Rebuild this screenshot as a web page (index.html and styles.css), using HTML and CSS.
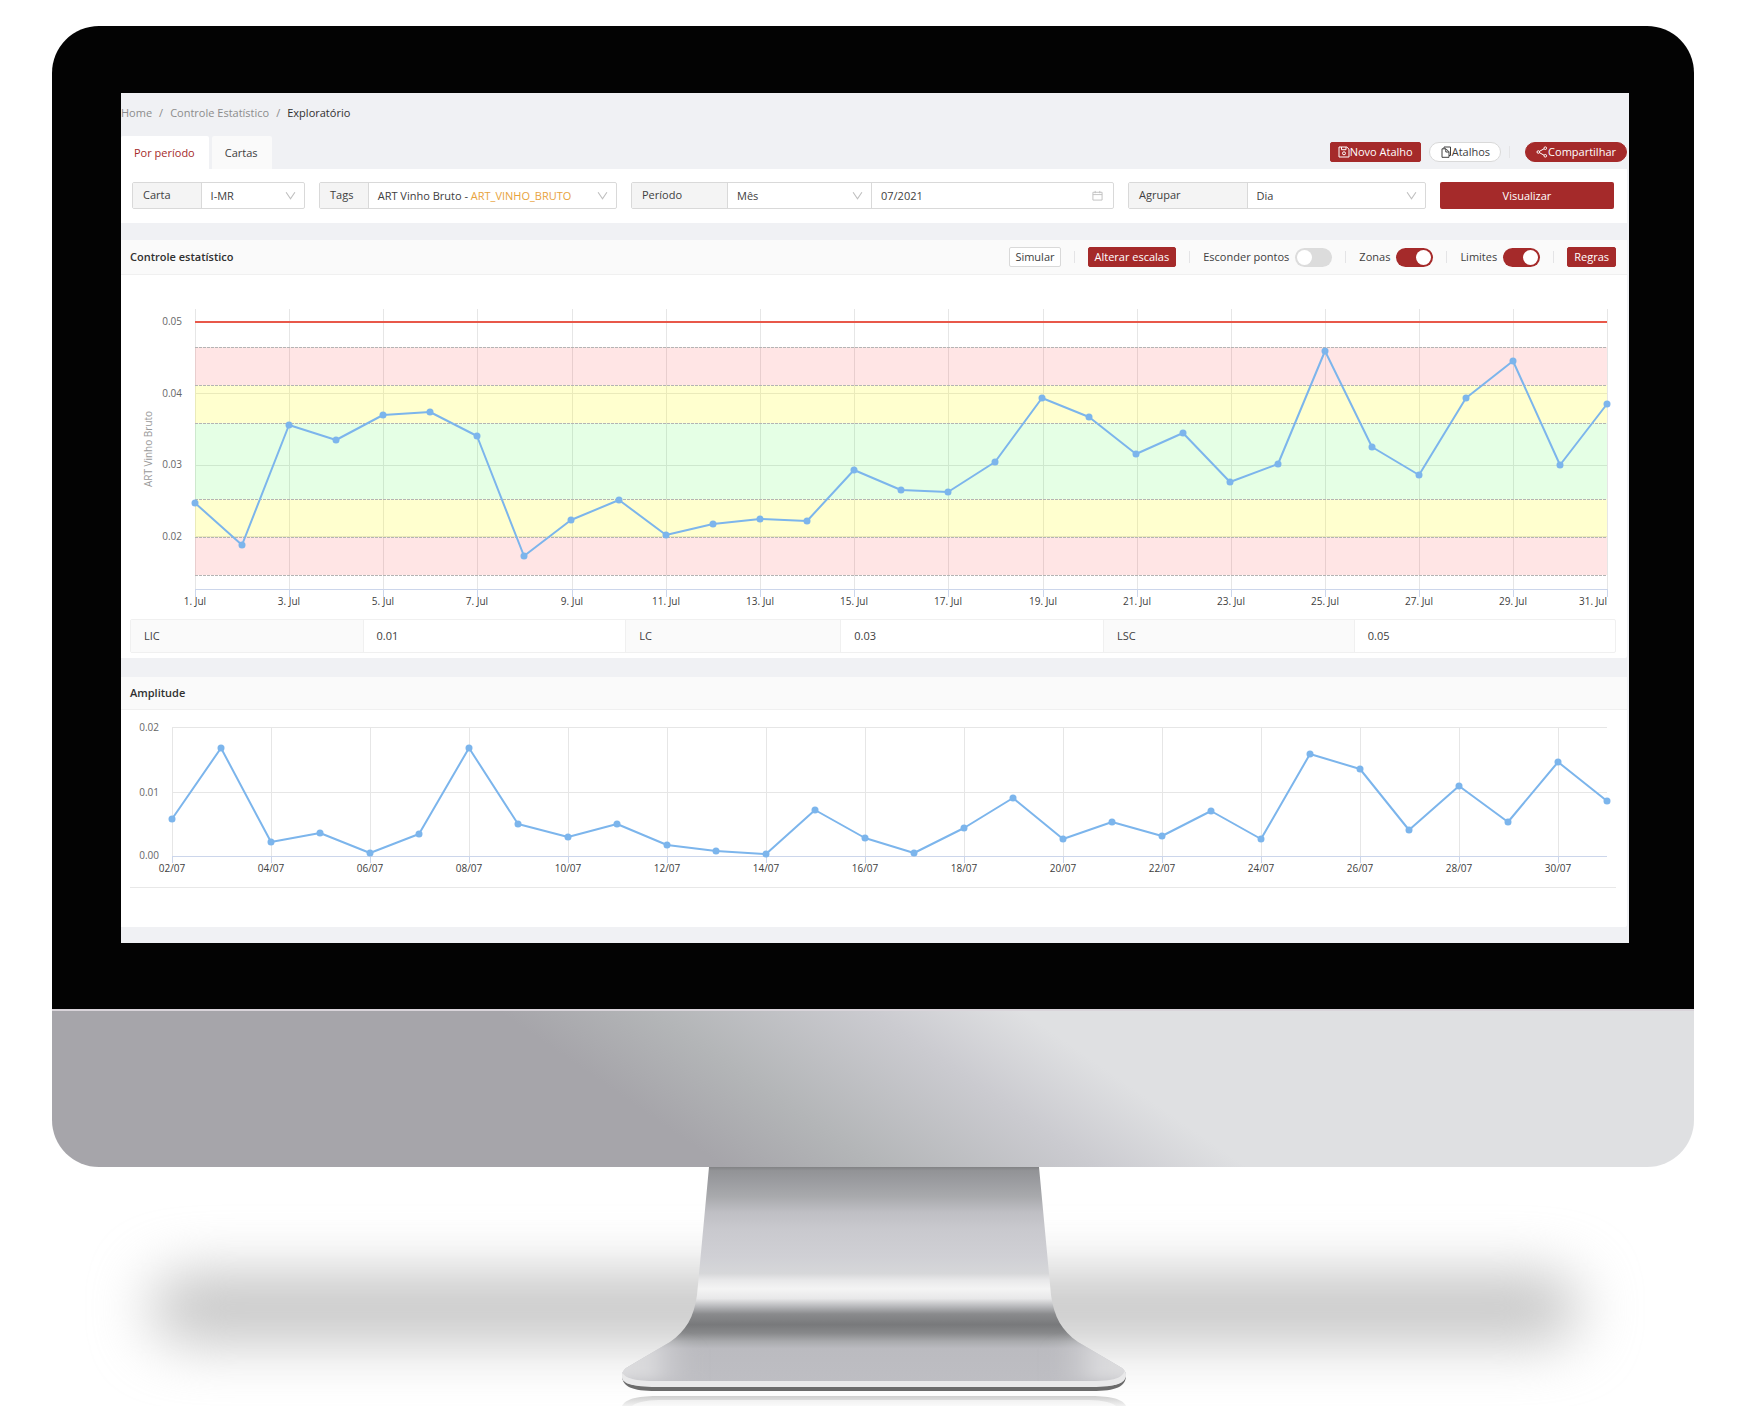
FILE: index.html
```html
<!DOCTYPE html>
<html lang="pt-BR">
<head>
<meta charset="utf-8">
<meta name="viewport" content="width=device-width, initial-scale=1">
<title>Controle Estatístico - Exploratório</title>
<link rel="stylesheet" href="styles.css">
</head>
<body>
<div class="workstation">
  <div class="monitor">
    <div class="bezel">
      <main class="screen">
        <nav class="breadcrumb" aria-label="Navegação">
          <a href="#home">Home</a><span class="sep">/</span><a href="#controle">Controle Estatístico</a><span class="sep">/</span><span class="current" aria-current="page">Exploratório</span>
        </nav>

        <div class="topbar">
          <div class="tabs" role="tablist">
            <button class="tab tab-active" type="button" role="tab" aria-selected="true">Por período</button>
            <button class="tab" type="button" role="tab" aria-selected="false">Cartas</button>
          </div>
          <div class="actions">
            <button class="btn btn-primary btn-save" type="button"><svg class="icon" viewBox="0 0 12 12" aria-hidden="true"><path d="M1 1h7.800L11 3.200V11H1zM3.500 1v2.700h4.500V1"/><circle cx="6" cy="7.300" r="1.500"/></svg>Novo Atalho</button>
            <button class="btn btn-pill" type="button"><svg class="icon" viewBox="0 0 12 12" aria-hidden="true"><path d="M4 2.500V1H10.500V9.500H9M2 2.800H6L9 5.800V11.300H2zM5.800 3V6H9"/></svg>Atalhos</button>
            <span class="divider"></span>
            <button class="btn btn-primary btn-pill btn-share" type="button"><svg class="icon" viewBox="0 0 12 12" aria-hidden="true"><path d="M3.500 5.300L8 2.800M3.500 6.700L8 9.200"/><circle cx="2.300" cy="6" r="1.300"/><circle cx="9.300" cy="2.200" r="1.300"/><circle cx="9.300" cy="9.800" r="1.300"/></svg>Compartilhar</button>
          </div>
        </div>

        <form class="filters">
          <div class="group group-carta">
            <label class="addon" for="carta">Carta</label>
            <div class="field"><select id="carta"><option>I-MR</option></select><svg class="chevron" viewBox="0 0 10 10" aria-hidden="true"><path d="M1 2L5 8L9 2"/></svg></div>
          </div>
          <div class="group group-tags">
            <label class="addon" for="tags">Tags</label>
            <div class="field"><button class="combo" id="tags" type="button" aria-haspopup="listbox">ART Vinho Bruto - <span class="tag-code">ART_VINHO_BRUTO</span></button><svg class="chevron" viewBox="0 0 10 10" aria-hidden="true"><path d="M1 2L5 8L9 2"/></svg></div>
          </div>
          <div class="group group-periodo">
            <label class="addon" for="periodo">Período</label>
            <div class="field"><select id="periodo"><option>Mês</option></select><svg class="chevron" viewBox="0 0 10 10" aria-hidden="true"><path d="M1 2L5 8L9 2"/></svg></div>
            <div class="field"><input id="mes" type="text" value="07/2021" aria-label="Mês de referência"><svg class="calendar" viewBox="0 0 12 12" aria-hidden="true"><path d="M1 2.500H11V11H1zM1 5H11M3.500 1V3.500M8.500 1V3.500"/></svg></div>
          </div>
          <div class="group group-agrupar">
            <label class="addon" for="agrupar">Agrupar</label>
            <div class="field"><select id="agrupar"><option>Dia</option></select><svg class="chevron" viewBox="0 0 10 10" aria-hidden="true"><path d="M1 2L5 8L9 2"/></svg></div>
          </div>
          <button class="submit" type="submit">Visualizar</button>
        </form>

        <section class="card card-control">
          <header class="card-head">
            <h2>Controle estatístico</h2>
            <div class="toolbar">
              <button class="btn" type="button">Simular</button>
              <span class="divider"></span>
              <button class="btn btn-primary" type="button">Alterar escalas</button>
              <span class="divider"></span>
              <label class="toggle">Esconder pontos<input type="checkbox" role="switch"></label>
              <span class="divider"></span>
              <label class="toggle">Zonas<input type="checkbox" role="switch" checked></label>
              <span class="divider"></span>
              <label class="toggle">Limites<input type="checkbox" role="switch" checked></label>
              <span class="divider"></span>
              <button class="btn btn-primary" type="button">Regras</button>
            </div>
          </header>
          <svg class="chart" viewBox="0 0 1506 337" role="img" aria-label="Carta de controle de ART Vinho Bruto">
            <defs>
              <marker id="dot" markerUnits="userSpaceOnUse" markerWidth="8" markerHeight="8" refX="4" refY="4"><circle class="dot" cx="4" cy="4" r="3.500"/></marker>
            </defs>
            <path class="grid" d="M74 34V314M168 34V314M262 34V314M356 34V314M451 34V314M545 34V314M639 34V314M733 34V314M827 34V314M922 34V314M1016 34V314M1110 34V314M1204 34V314M1298 34V314M1392 34V314M1486 34V314M74 118H1486M74 190H1486M74 261H1486"/>
            <g>
              <rect class="zone-red" x="74" y="72" width="1412" height="38"/>
              <rect class="zone-yellow" x="74" y="110" width="1412" height="38"/>
              <rect class="zone-green" x="74" y="148" width="1412" height="76"/>
              <rect class="zone-yellow" x="74" y="224" width="1412" height="38"/>
              <rect class="zone-red" x="74" y="262" width="1412" height="38"/>
            </g>
            <path class="zone-line" d="M74 72H1486M74 110H1486M74 148H1486M74 224H1486M74 262H1486M74 300H1486"/>
            <path class="axis" d="M74 314H1486M74 314V322M168 314V322M262 314V322M356 314V322M451 314V322M545 314V322M639 314V322M733 314V322M827 314V322M922 314V322M1016 314V322M1110 314V322M1204 314V322M1298 314V322M1392 314V322M1486 314V322"/>
            <path class="limit" d="M74 47H1486"/>
            <polyline class="series" points="74,228 121,270 168,150 215,165 262,140 309,137 356,161 403,281 450,245 498,225 545,260 592,249 639,244 686,246 733,195 780,215 827,217 874,187 921,123 968,142 1015,179 1062,158 1109,207 1157,189 1204,76 1251,172 1298,200 1345,123 1392,86 1439,190 1486,129"/>
            <g class="y-labels">
              <text x="61" y="50">0.05</text><text x="61" y="122">0.04</text><text x="61" y="193">0.03</text><text x="61" y="265">0.02</text>
            </g>
            <text class="axis-title" transform="translate(31 174) rotate(-90)">ART Vinho Bruto</text>
            <g class="x-labels">
              <text x="74" y="330">1. Jul</text><text x="168" y="330">3. Jul</text><text x="262" y="330">5. Jul</text><text x="356" y="330">7. Jul</text><text x="451" y="330">9. Jul</text><text x="545" y="330">11. Jul</text><text x="639" y="330">13. Jul</text><text x="733" y="330">15. Jul</text><text x="827" y="330">17. Jul</text><text x="922" y="330">19. Jul</text><text x="1016" y="330">21. Jul</text><text x="1110" y="330">23. Jul</text><text x="1204" y="330">25. Jul</text><text x="1298" y="330">27. Jul</text><text x="1392" y="330">29. Jul</text><text class="last" x="1486" y="330">31. Jul</text>
            </g>
          </svg>
          <table class="limits">
            <colgroup><col class="c-lic"><col class="c-lic-value"><col class="c-lc"><col class="c-lc-value"><col class="c-lsc"><col></colgroup>
            <tbody>
              <tr><th scope="row">LIC</th><td>0.01</td><th scope="row">LC</th><td>0.03</td><th scope="row">LSC</th><td>0.05</td></tr>
            </tbody>
          </table>
        </section>

        <section class="card card-range">
          <header class="card-head"><h2>Amplitude</h2></header>
          <svg class="chart" viewBox="0 0 1506 177" role="img" aria-label="Gráfico de amplitude">
            <path class="grid" d="M51 17V146M150 17V146M249 17V146M348 17V146M447 17V146M546 17V146M645 17V146M744 17V146M843 17V146M942 17V146M1041 17V146M1140 17V146M1239 17V146M1338 17V146M1437 17V146M51 17H1486M51 82H1486"/>
            <path class="axis" d="M51 146H1486M51 146V153M150 146V153M249 146V153M348 146V153M447 146V153M546 146V153M645 146V153M744 146V153M843 146V153M942 146V153M1041 146V153M1140 146V153M1239 146V153M1338 146V153M1437 146V153"/>
            <polyline class="series" points="51,109 100,38 150,132 199,123 249,143 298,124 348,38 397,114 447,127 496,114 546,135 595,141 645,144 694,100 744,128 793,143 843,118 892,88 942,129 991,112 1041,126 1090,101 1140,129 1189,44 1239,59 1288,120 1338,76 1387,112 1437,52 1486,91"/>
            <g class="y-labels">
              <text x="38" y="21">0.02</text><text x="38" y="86">0.01</text><text x="38" y="149">0.00</text>
            </g>
            <g class="x-labels">
              <text x="51" y="162">02/07</text><text x="150" y="162">04/07</text><text x="249" y="162">06/07</text><text x="348" y="162">08/07</text><text x="447" y="162">10/07</text><text x="546" y="162">12/07</text><text x="645" y="162">14/07</text><text x="744" y="162">16/07</text><text x="843" y="162">18/07</text><text x="942" y="162">20/07</text><text x="1041" y="162">22/07</text><text x="1140" y="162">24/07</text><text x="1239" y="162">26/07</text><text x="1338" y="162">28/07</text><text x="1437" y="162">30/07</text>
            </g>
          </svg>
          <hr class="rule">
        </section>
      </main>
    </div>
    <div class="chin"></div>
  </div>

  <div class="base">
    <div class="floor-shadow"></div>
    <svg class="stand" viewBox="0 0 506 239" aria-hidden="true">
      <defs>
        <linearGradient id="metal" gradientUnits="userSpaceOnUse" x1="0" y1="0" x2="0" y2="239">
          <stop offset="0" stop-color="#828385"/><stop offset=".015" stop-color="#929396"/><stop offset=".06" stop-color="#9b9ca0"/><stop offset=".125" stop-color="#a9aaad"/><stop offset=".19" stop-color="#bfbfc4"/><stop offset=".26" stop-color="#c9c9ce"/><stop offset=".38" stop-color="#d0d0d5"/><stop offset=".445" stop-color="#d6d7d9"/><stop offset=".475" stop-color="#e9e9ea"/><stop offset=".51" stop-color="#f4f4f4"/><stop offset=".55" stop-color="#e8e8e9"/><stop offset=".585" stop-color="#b5b6b9"/><stop offset=".615" stop-color="#8a8b8d"/><stop offset=".66" stop-color="#78797b"/><stop offset=".695" stop-color="#88898b"/><stop offset=".73" stop-color="#a9aaad"/><stop offset=".76" stop-color="#bbbbc0"/><stop offset=".9" stop-color="#bebec3"/>
        </linearGradient>
        <linearGradient id="shine-l"><stop offset="0" stop-color="#e0e0e2"/><stop offset=".5" stop-color="#dcdcde" stop-opacity=".85"/><stop offset="1" stop-color="#bebec3" stop-opacity="0"/></linearGradient>
        <linearGradient id="shine-r" x1="1" x2="0"><stop offset="0" stop-color="#e0e0e2"/><stop offset=".5" stop-color="#dcdcde" stop-opacity=".85"/><stop offset="1" stop-color="#bebec3" stop-opacity="0"/></linearGradient>
        <linearGradient id="reflection" x1="0" y1="0" x2="0" y2="1"><stop offset="0" stop-color="#cfcfcf"/><stop offset="1" stop-color="#f2f2f2"/></linearGradient>
        <clipPath id="stand-shape"><path d="M89 0H419L431 128C434 150 442 164 458 175L502 201Q506 204 506 209C504 217 496 219 480 219H28C12 219 2 217 2 209Q2 204 6 201L50 175C66 164 74 150 77 128Z"/></clipPath>
        <filter id="soft" x="-20%" y="-30%" width="140%" height="160%"><feGaussianBlur stdDeviation="6"/></filter>
      </defs>
      <path fill="url(#reflection)" d="M2 239C6 231 20 229 40 229H468C488 229 502 231 506 239Z"/>
      <path fill="#fff" d="M12 239C18 234 30 233 44 233H464C478 233 490 234 496 239Z" opacity=".6"/>
      <path fill="#6b6b6b" d="M2 208C2 220 12 224 36 224H472C496 224 506 220 506 208Z"/>
      <path fill="#e9e9ea" d="M2 205C2 216 12 220 36 220H472C496 220 506 216 506 205Z"/>
      <g clip-path="url(#stand-shape)">
        <rect width="506" height="214" fill="url(#metal)"/>
        <path fill="url(#shine-l)" filter="url(#soft)" d="M-20 239V190L50 172L82 182V214H-20Z"/>
        <path fill="url(#shine-r)" filter="url(#soft)" d="M528 239V190L458 172L426 182V214H528Z"/>
        <path fill="#e9e9ea" d="M0 200C2 212 14 214 40 214H468C494 214 504 212 506 200V220H0Z"/>
      </g>
    </svg>
  </div>
</div>
</body>
</html>
```
FILE: styles.css
```css
* { box-sizing: border-box; }

body {
  margin: 0;
  background: #fff;
  color: #404040;
  font-family: "Open Sans", "Noto Sans", sans-serif;
  font-size: 11px;
  line-height: 16px;
}

button, input, select { font: inherit; color: inherit; }

.workstation { padding: 26px 64px 0 52px; overflow: hidden; }

/* Monitor */
.monitor {
  position: relative;
  z-index: 1;
  border-radius: 47px;
  overflow: hidden;
}
.bezel { background: #030303; padding: 67px 65px 66px 69px; }
.chin {
  height: 158px;
  border-top: 2px solid #d9d4da;
  background: linear-gradient(34.7deg, #a6a5aa 36%, #b3b5b7 44%, #cbcbd0 56%, #dfe0e2 64%);
}

/* Screen */
.screen {
  background: #f0f1f4;
  padding: 0 2px 16px 0;
  overflow: hidden;
}
.breadcrumb {
  display: flex;
  height: 43px;
  padding-bottom: 3px;
  align-items: center;
  color: #8c8c8c;
}
.breadcrumb a { color: inherit; text-decoration: none; }
.breadcrumb .sep { margin: 0 7px; }
.breadcrumb .current { color: #303030; }

.topbar { display: flex; justify-content: space-between; }
.tabs { display: flex; gap: 3px; }
.tab {
  height: 33px;
  padding: 0 14px 0 13px;
  border: 0;
  border-radius: 2px 2px 0 0;
  background: #fafafa;
}
.tab-active { background: #fff; color: #a52a2a; }
.actions { display: flex; align-items: center; gap: 8px; padding-bottom: 2px; }

.btn {
  display: inline-flex;
  align-items: center;
  height: 20px;
  padding: 0 5px;
  border: 1px solid #d9d9d9;
  border-radius: 2px;
  background: #fff;
  white-space: nowrap;
}
.btn-primary { padding: 0 6px; background: #a52a2a; border-color: #a52a2a; color: #fff; }
.btn-save { padding: 0 7px; }
.btn-pill { border-radius: 10px; padding: 0 10px; }
.btn-share { margin-left: 7px; }
.icon {
  width: 12px;
  height: 12px;
  fill: none;
  stroke: currentColor;
  stroke-width: 1;
}
.divider { width: 1px; height: 12px; background: #e4e4e6; }

/* Filters */
.filters {
  display: grid;
  grid-template-columns: 173fr 298fr 483fr 298fr 174fr;
  gap: 14px;
  padding: 13px 13px 14px 11px;
  background: #fff;
}
.group {
  display: grid;
  height: 27px;
  border: 1px solid #d9d9d9;
  border-radius: 2px;
  background: #fff;
}
.group-carta { grid-template-columns: 68fr 104fr; }
.group-tags { grid-template-columns: 48fr 250fr; }
.group-periodo { grid-template-columns: 95fr 144fr 242fr; }
.group-agrupar { grid-template-columns: 118fr 179fr; }
.addon { padding: 4px 0 4px 10px; background: #f4f4f4; }
.field { position: relative; border-left: 1px solid #d9d9d9; }
.field select, .field input, .combo {
  display: block;
  width: 100%;
  height: 25px;
  padding: 0 9px;
  border: 0;
  background: none;
  appearance: none;
  text-align: left;
  white-space: nowrap;
}
.tag-code { color: #e8a23c; }
.chevron, .calendar {
  position: absolute;
  top: 7px;
  right: 8px;
  width: 11px;
  height: 11px;
  fill: none;
  stroke: #bfbfbf;
  stroke-width: 1;
  pointer-events: none;
}
.calendar { right: 10px; }
.submit {
  height: 27px;
  border: 0;
  border-radius: 2px;
  background: #a52a2a;
  color: #fff;
}

/* Cards */
.card { background: #fff; border-radius: 0 2px 2px 0; }
.card-control { margin-top: 17px; padding-bottom: 5px; }
.card-range { margin-top: 19px; padding-bottom: 39px; }
.card-head {
  display: flex;
  align-items: center;
  justify-content: space-between;
  height: 35px;
  padding: 0 11px 0 9px;
  border-bottom: 1px solid #f0f0f0;
  background: #fafafa;
}
.card-range .card-head { height: 33px; }
.card-head h2 { margin: 0; font-size: 11px; font-weight: 600; color: #303030; }
.toolbar { display: flex; align-items: center; gap: 13px; }
.toggle { display: flex; align-items: center; gap: 6px; }
.toggle input {
  appearance: none;
  width: 37px;
  height: 19px;
  margin: 0;
  padding: 2px;
  border-radius: 10px;
  background: #dcdcdc;
}
.toggle input::before {
  content: "";
  display: block;
  width: 15px;
  height: 15px;
  border-radius: 50%;
  background: #fff;
}
.toggle input:checked { background: #a52a2a; }
.toggle input:checked::before { margin-left: auto; }

/* Charts */
.chart { display: block; width: 100%; }
.grid { fill: none; stroke: #e6e6e6; shape-rendering: crispEdges; }
.axis { fill: none; stroke: #ccd6eb; shape-rendering: crispEdges; }
.zone-red { fill: rgba(255, 0, 0, .1); }
.zone-yellow { fill: rgba(255, 255, 0, .19); }
.zone-green { fill: rgba(0, 255, 0, .1); }
.zone-line { fill: none; stroke: #b4b4b4; stroke-dasharray: 3 1; shape-rendering: crispEdges; }
.limit { stroke: #e8584a; stroke-width: 2; }
.series {
  fill: none;
  stroke: #7cb5ec;
  stroke-width: 2;
  stroke-linejoin: round;
  marker: url(#dot);
}
.dot { fill: #7cb5ec; }
.y-labels, .x-labels, .axis-title { font-size: 10px; }
.y-labels { fill: #666; text-anchor: end; }
.x-labels { fill: #404040; text-anchor: middle; }
.x-labels .last { text-anchor: end; }
.axis-title { fill: #999; text-anchor: middle; }

.limits {
  width: calc(100% - 20px);
  height: 34px;
  margin: 7px 11px 0 9px;
  border: 1px solid #f0f0f0;
  border-radius: 2px;
  border-spacing: 0;
  table-layout: fixed;
}
.limits th, .limits td { padding: 0 13px; text-align: left; font-weight: 400; }
.limits th { background: #fafafa; }
.limits th + td, .limits td + th { border-left: 1px solid #f0f0f0; }
.c-lic { width: 15.6%; }
.c-lic-value, .c-lc-value { width: 17.7%; }
.c-lc { width: 14.5%; }
.c-lsc { width: 16.9%; }

.rule { margin: 0 11px 0 9px; border: 0; border-top: 1px solid #e8e8e8; }

/* Stand */
.base { position: relative; display: flex; justify-content: center; }
.stand { position: relative; width: 506px; height: 239px; }
.floor-shadow {
  position: absolute;
  top: 109px;
  left: 6%;
  right: 7%;
  height: 64px;
  border-radius: 32px;
  background: #c0c0c0;
  filter: blur(30px);
}
```
